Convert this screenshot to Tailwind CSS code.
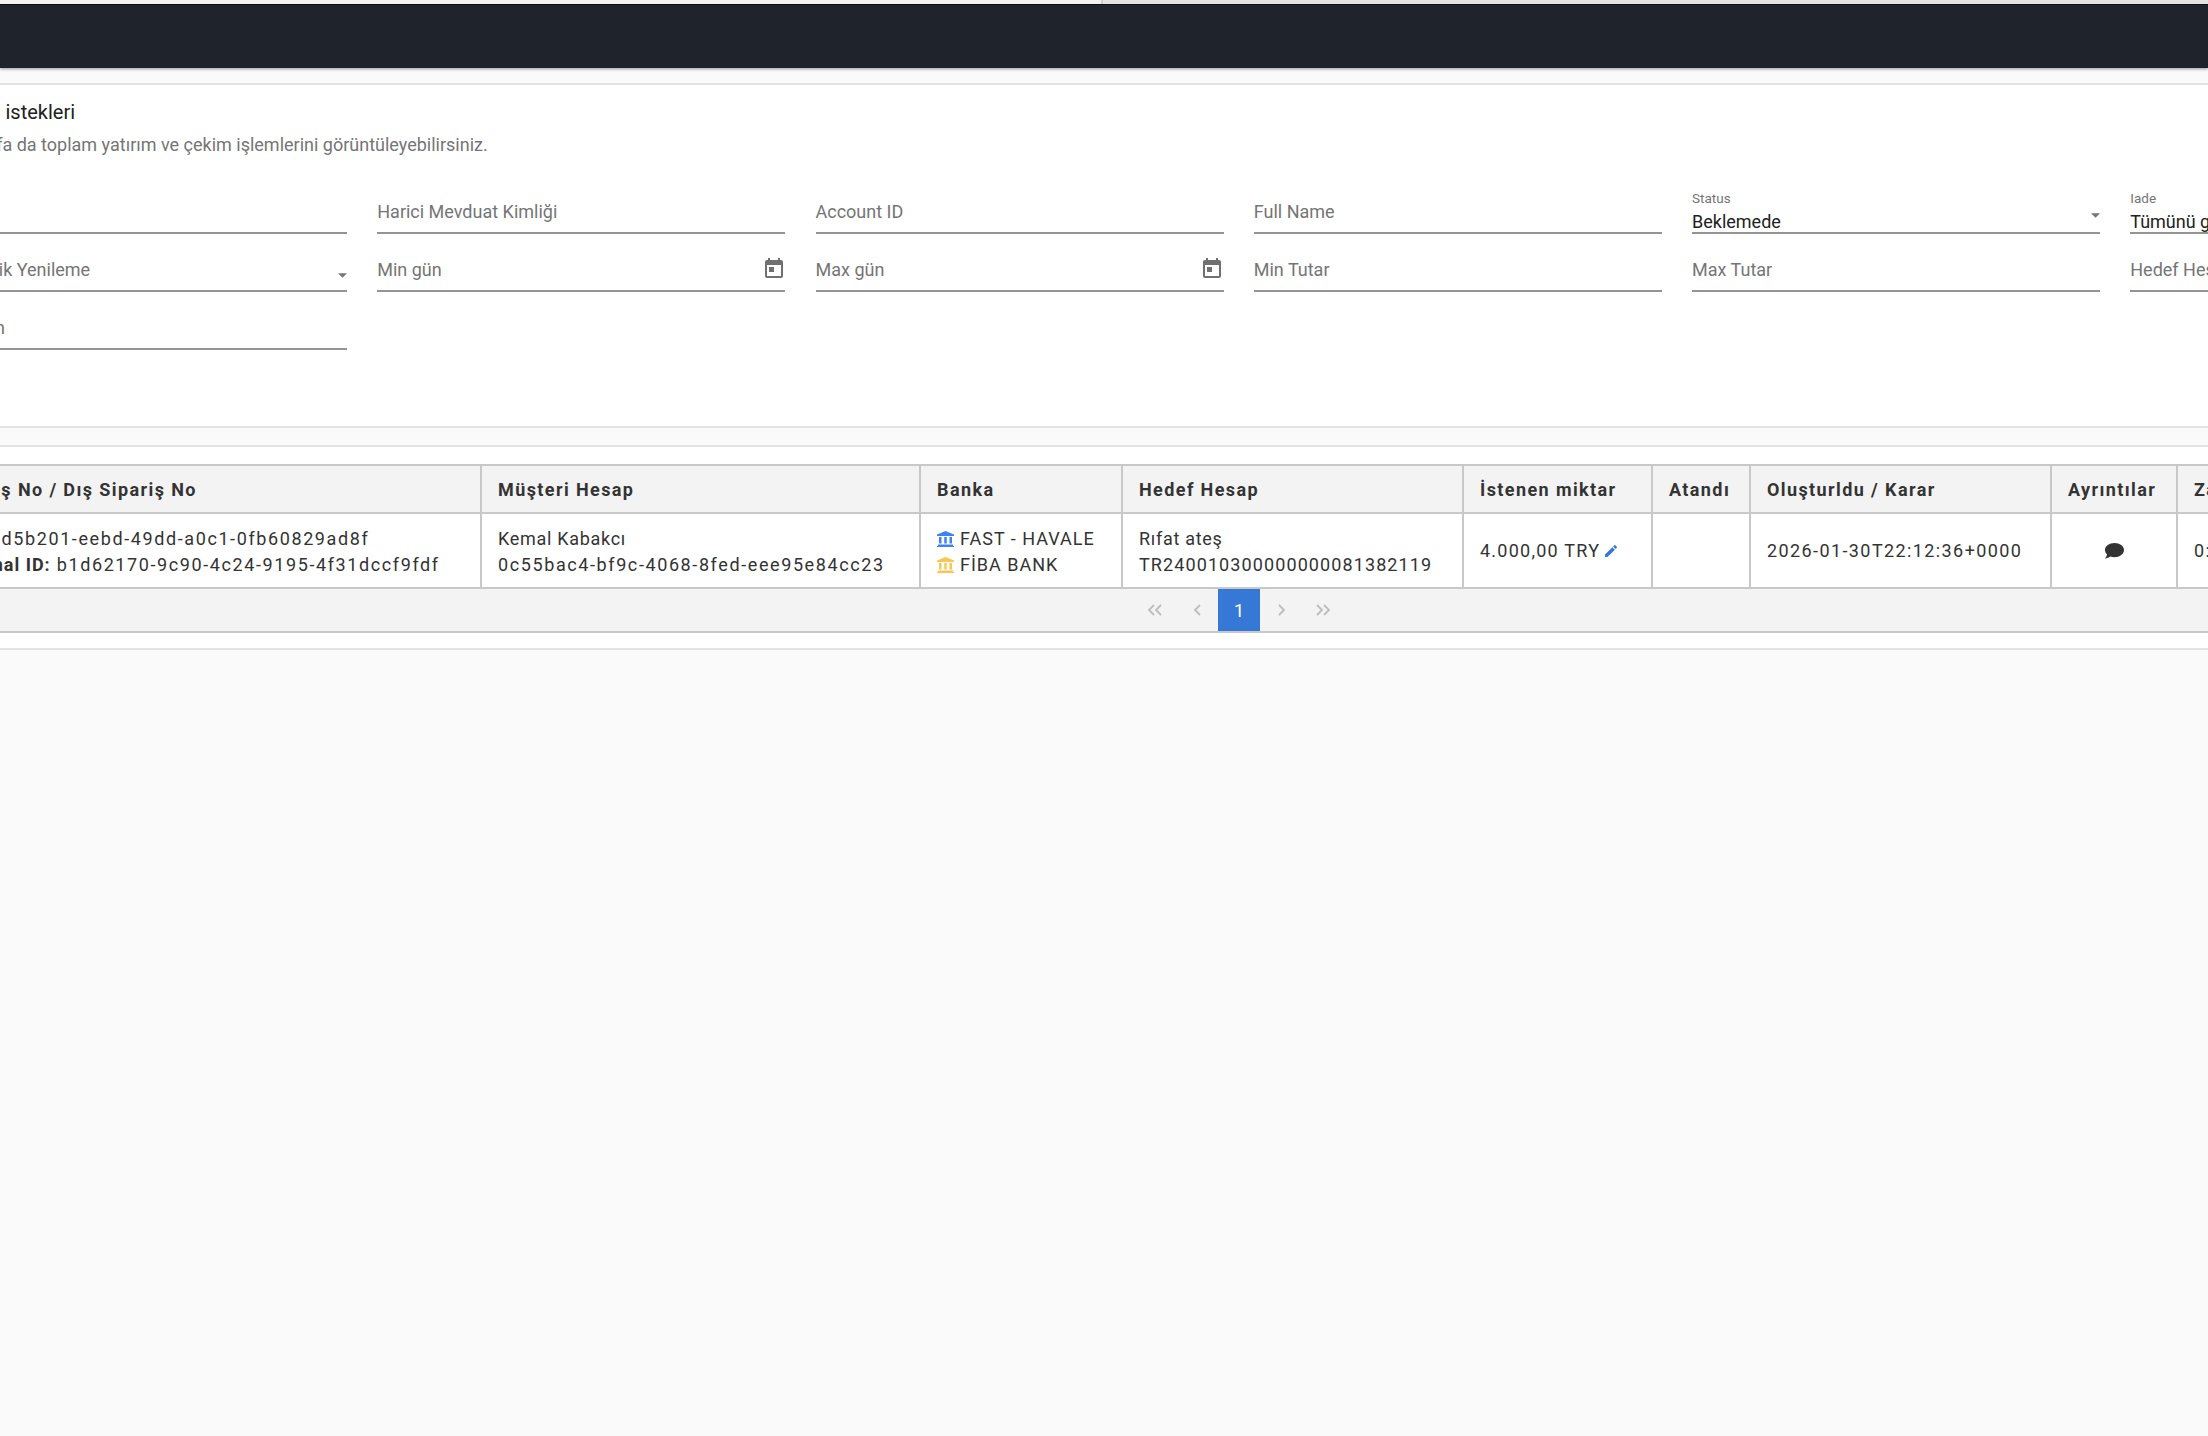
<!DOCTYPE html>
<html lang="en">
<head>
    <meta charset="UTF-8">
    <title>Para yatırma istekleri</title>
    <script src="https://cdn.jsdelivr.net/npm/@tailwindcss/browser@4"></script>
</head>
<body class="bg-[#fafafa] font-['Roboto',sans-serif] overflow-hidden h-[1436px] w-[2208px]">
    <!-- Browser strip -->
    <div class="flex h-[4px]">
        <div class="w-[1103px] bg-[#f2f2f2] border-r-2 border-[#cfcfcf]"></div>
        <div class="flex-1 bg-[#e3e3e3]"></div>
    </div>

    <!-- Top bar -->
    <div class="h-[64px] bg-[#1f232b] border-t border-[#0d0f13] shadow-[0_1px_3px_rgba(0,0,0,0.4)]"></div>

    <!-- Filter card -->
    <div class="mt-[15px] bg-white border-y-2 border-[#e2e2e2] h-[345px] overflow-hidden">
        <div class="ml-[-112px] pt-[13px] text-[20px] leading-[28px] text-[#212121] whitespace-nowrap">Para yatırma istekleri</div>
        <div class="ml-[-57px] mt-[7px] text-[18px] leading-[24px] text-[#757575] whitespace-nowrap">Bu sayfa da toplam yatırım ve çekim işlemlerini görüntüleyebilirsiniz.</div>

        <div class="ml-[-61px] mt-[19px] grid grid-cols-[repeat(7,408px)] gap-x-[30.25px] auto-rows-[58px] w-max text-[18px] text-[#757575]">
            <div class="border-b-2 border-[#949494]"></div>
            <div class="border-b-2 border-[#949494] flex items-end pb-[7px]">Harici Mevduat Kimliği</div>
            <div class="border-b-2 border-[#949494] flex items-end pb-[7px]">Account ID</div>
            <div class="border-b-2 border-[#949494] flex items-end pb-[7px]">Full Name</div>
            <div class="border-b-2 border-[#949494] relative">
                <div class="absolute top-[14px] left-0 text-[13.5px] leading-[16px]">Status</div>
                <div class="absolute bottom-[-2px] left-0 right-0 flex justify-between text-[#212121] leading-[24px]">
                    <span>Beklemede</span>
                    <svg class="w-[9px] h-[5px] mt-[3px]" viewBox="0 0 10 5"><path d="M0 0l5 5 5-5z" fill="#757575"/></svg>
                </div>
            </div>
            <div class="border-b-2 border-[#949494] relative">
                <div class="absolute top-[14px] left-0 text-[13.5px] leading-[16px]">Iade</div>
                <div class="absolute bottom-[-2px] left-0 text-[#212121] leading-[24px] whitespace-nowrap">Tümünü göster</div>
            </div>
            <div></div>

            <div class="border-b-2 border-[#949494] flex items-end justify-between pb-[7px] whitespace-nowrap">
                <span>Otomatik Yenileme</span>
                <svg class="w-[9px] h-[5px] mb-[5px]" viewBox="0 0 10 5"><path d="M0 0l5 5 5-5z" fill="#757575"/></svg>
            </div>
            <div class="border-b-2 border-[#949494] flex items-end justify-between pb-[7px]">
                <span>Min gün</span>
                <svg class="w-[24px] h-[24px] mb-[3px] mr-[-1px]" viewBox="0 0 24 24"><path d="M19 4h-1V2h-2v2H8V2H6v2H5c-1.100 0-2 .9-2 2v14c0 1.100.9 2 2 2h14c1.100 0 2-.9 2-2V6c0-1.100-.9-2-2-2zm0 16H5V9h14v11z" fill="#707070"/><rect x="7" y="11" width="5" height="5" fill="#707070"/></svg>
            </div>
            <div class="border-b-2 border-[#949494] flex items-end justify-between pb-[7px]">
                <span>Max gün</span>
                <svg class="w-[24px] h-[24px] mb-[3px]" viewBox="0 0 24 24"><path d="M19 4h-1V2h-2v2H8V2H6v2H5c-1.100 0-2 .9-2 2v14c0 1.100.9 2 2 2h14c1.100 0 2-.9 2-2V6c0-1.100-.9-2-2-2zm0 16H5V9h14v11z" fill="#707070"/><rect x="7" y="11" width="5" height="5" fill="#707070"/></svg>
            </div>
            <div class="border-b-2 border-[#949494] flex items-end pb-[7px]">Min Tutar</div>
            <div class="border-b-2 border-[#949494] flex items-end pb-[7px]">Max Tutar</div>
            <div class="border-b-2 border-[#949494] flex items-end pb-[7px] whitespace-nowrap">Hedef Hesap</div>
            <div></div>

            <div class="border-b-2 border-[#949494] flex items-end pb-[7px] whitespace-nowrap">Hesabın</div>
        </div>
    </div>

    <!-- Table panel -->
    <div class="h-[19px] bg-[#fafafa] border-b-2 border-[#e2e2e2]"></div>
    <div class="bg-white border-b-2 border-[#e2e2e2] h-[203px] pt-[17px] overflow-hidden">
        <div class="ml-[-94px] w-max text-[#333]">
            <div class="grid grid-cols-[574px_439px_202px_341px_189px_98px_301px_126px_120px] border-t-2 border-[#c8c8c8] bg-[#f3f3f3] h-[48px] text-[18px] font-bold tracking-[1.4px]">
                <div class="pl-[40px] flex items-center whitespace-nowrap">Sipariş No / Dış Sipariş No</div>
                <div class="px-[16px] flex items-center border-l-2 border-[#c8c8c8]">Müşteri Hesap</div>
                <div class="px-[16px] flex items-center border-l-2 border-[#c8c8c8]">Banka</div>
                <div class="px-[16px] flex items-center border-l-2 border-[#c8c8c8]">Hedef Hesap</div>
                <div class="px-[16px] flex items-center border-l-2 border-[#c8c8c8]">İstenen miktar</div>
                <div class="px-[16px] flex items-center border-l-2 border-[#c8c8c8]">Atandı</div>
                <div class="px-[16px] flex items-center border-l-2 border-[#c8c8c8]">Oluşturldu / Karar</div>
                <div class="px-[16px] flex items-center border-l-2 border-[#c8c8c8]">Ayrıntılar</div>
                <div class="px-[16px] flex items-center border-l-2 border-[#c8c8c8]">Zaman</div>
            </div>
            <div class="grid grid-cols-[574px_439px_202px_341px_189px_98px_301px_126px_120px] border-y-2 border-[#c8c8c8] bg-white h-[77px] text-[18px] leading-[26px]">
                <div class="pl-[40px] pt-[2px] flex flex-col justify-center whitespace-nowrap tracking-[1.6px]">
                    <div class="ml-[1px]"><b class="tracking-[1px]">ID:</b> 09d5b201-eebd-49dd-a0c1-0fb60829ad8f</div>
                    <div><b class="tracking-[1px]">External ID:</b> b1d62170-9c90-4c24-9195-4f31dccf9fdf</div>
                </div>
                <div class="px-[16px] pt-[2px] flex flex-col justify-center border-l-2 border-[#c8c8c8] whitespace-nowrap">
                    <div class="tracking-[0.7px]">Kemal Kabakcı</div>
                    <div class="tracking-[1.6px]">0c55bac4-bf9c-4068-8fed-eee95e84cc23</div>
                </div>
                <div class="px-[16px] pt-[2px] flex flex-col justify-center border-l-2 border-[#c8c8c8] whitespace-nowrap tracking-[1px]">
                    <div class="flex items-center gap-[6px]">
                        <svg class="w-[17px] h-[16px]" viewBox="0 0 17 16"><path d="M8.500 0L0 3.600V5h17V3.600zM2 6v6.500h2.500V6zm5.250 0v6.500h2.500V6zm5.250 0v6.500H15V6zM1 13.500V15h15v-1.500zM0 15v1h17v-1z" fill="#3b82f6"/></svg>
                        FAST - HAVALE
                    </div>
                    <div class="flex items-center gap-[6px]">
                        <svg class="w-[17px] h-[16px]" viewBox="0 0 17 16"><path d="M8.500 0L0 3.600V5h17V3.600zM2 6v6.500h2.500V6zm5.250 0v6.500h2.500V6zm5.250 0v6.500H15V6zM1 13.500V15h15v-1.500zM0 15v1h17v-1z" fill="#fbc64f"/></svg>
                        FİBA BANK
                    </div>
                </div>
                <div class="px-[16px] pt-[2px] flex flex-col justify-center border-l-2 border-[#c8c8c8] whitespace-nowrap">
                    <div class="tracking-[0.7px]">Rıfat ateş</div>
                    <div class="tracking-[1.1px]">TR240010300000000081382119</div>
                </div>
                <div class="px-[16px] flex items-center gap-[3px] border-l-2 border-[#c8c8c8] whitespace-nowrap tracking-[1.25px]">
                    4.000,00 TRY
                    <svg class="w-[16px] h-[16px]" viewBox="0 0 24 24"><path d="M3 17.250V21h3.750L17.810 9.940l-3.750-3.750L3 17.250zM20.710 7.040a1 1 0 0 0 0-1.410l-2.340-2.340a1 1 0 0 0-1.410 0l-1.830 1.830 3.750 3.750 1.830-1.830z" fill="#3578d6"/></svg>
                </div>
                <div class="border-l-2 border-[#c8c8c8]"></div>
                <div class="px-[16px] flex items-center border-l-2 border-[#c8c8c8] whitespace-nowrap tracking-[1.4px]">2026-01-30T22:12:36+0000</div>
                <div class="flex items-center justify-center border-l-2 border-[#c8c8c8]">
                    <svg class="w-[19px] h-[16px]" viewBox="0 0 19 16"><path d="M9.500 0C4.250 0 0 3 0 7c0 1.700.8 3.200 2.100 4.400-.3 1.300-1 2.600-2.100 4 2 0 4-.7 5.300-1.800 1.300.4 2.700.6 4.200.6 5.250 0 9.500-3.200 9.500-7.200S14.750 0 9.500 0z" fill="#333"/></svg>
                </div>
                <div class="px-[16px] flex items-center border-l-2 border-[#c8c8c8] whitespace-nowrap tracking-[1.4px]">0:15:00</div>
            </div>
            <div class="bg-[#f3f3f3] border-b-2 border-[#c8c8c8] h-[44px] w-[2400px]">
                <div class="ml-[1228px] flex h-full">
                    <button class="w-[42px] flex items-center justify-center"><svg class="w-[16px] h-[12px]" viewBox="0 0 16 12" fill="none" stroke="#bdbdbd" stroke-width="1.800"><path d="M7 1L2 6l5 5M14 1L9 6l5 5"/></svg></button>
                    <button class="w-[42px] flex items-center justify-center"><svg class="w-[9px] h-[12px]" viewBox="0 0 9 12" fill="none" stroke="#bdbdbd" stroke-width="1.800"><path d="M7 1L2 6l5 5"/></svg></button>
                    <button class="w-[42px] bg-[#3578d6] text-white text-[18px]">1</button>
                    <button class="w-[42px] flex items-center justify-center"><svg class="w-[9px] h-[12px]" viewBox="0 0 9 12" fill="none" stroke="#bdbdbd" stroke-width="1.800"><path d="M2 1l5 5-5 5"/></svg></button>
                    <button class="w-[42px] flex items-center justify-center"><svg class="w-[16px] h-[12px]" viewBox="0 0 16 12" fill="none" stroke="#bdbdbd" stroke-width="1.800"><path d="M2 1l5 5-5 5M9 1l5 5-5 5"/></svg></button>
                </div>
            </div>
        </div>
    </div>
</body>
</html>
